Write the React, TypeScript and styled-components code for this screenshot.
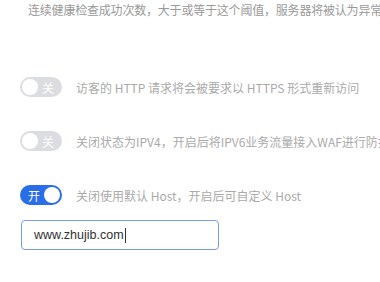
import React from "react";
import styled, { createGlobalStyle } from "styled-components";

const Global = createGlobalStyle`
  html, body {
    margin: 0;
    padding: 0;
    background: #ffffff;
  }
  body {
    font-family: "Noto Sans CJK SC", "Noto Sans", sans-serif;
    overflow: hidden;
  }
`;

const Page = styled.div`
  width: 380px;
  height: 282px;
  padding-left: 20px;
  box-sizing: border-box;
  display: flex;
  flex-direction: column;
  overflow: hidden;
`;

const Hint = styled.p`
  margin: 0 0 0 8px;
  height: 20px;
  line-height: 20px;
  font-size: 12px;
  letter-spacing: -0.2px;
  color: #999999;
  white-space: nowrap;
`;

const Row = styled.div<{ $top: number }>`
  margin-top: ${(p) => p.$top}px;
  height: 20px;
  display: flex;
  align-items: center;
  gap: 14px;
`;

const Track = styled.span<{ $on: boolean }>`
  position: relative;
  flex: none;
  width: 42px;
  height: 20px;
  border-radius: 10px;
  box-sizing: border-box;
  background: ${(p) => (p.$on ? "#2a6de8" : "#dcdde1")};
  display: flex;
  align-items: center;
  justify-content: ${(p) => (p.$on ? "flex-start" : "flex-end")};
  padding: 0 8px;
  color: #ffffff;
  font-size: 12px;
`;

const Knob = styled.span<{ $on: boolean }>`
  position: absolute;
  top: 2px;
  ${(p) => (p.$on ? "right: 2px;" : "left: 2px;")}
  width: 16px;
  height: 16px;
  border-radius: 50%;
  background: #ffffff;
`;

const Label = styled.span`
  font-size: 12px;
  color: #aaaaaa;
  white-space: nowrap;
`;

const Field = styled.div`
  margin-top: 15px;
  margin-left: 1px;
  width: 198px;
  height: 30px;
  box-sizing: border-box;
  border: 1px solid #779dea;
  border-radius: 4px;
  padding-left: 12px;
  display: flex;
  align-items: center;
  font-family: "Liberation Sans", "Noto Sans CJK SC", sans-serif;
  font-size: 12.5px;
  color: #303133;
`;

const Caret = styled.span`
  display: inline-block;
  width: 1px;
  height: 15px;
  background: #303133;
  margin-left: 1px;
`;

const Switch = ({ on }: { on: boolean }) => (
  <Track $on={on}>
    {on ? "开" : "关"}
    <Knob $on={on} />
  </Track>
);

export default function App() {
  return (
    <Page>
      <Global />
      <Hint>连续健康检查成功次数，大于或等于这个阈值，服务器将被认为异常</Hint>
      <Row $top={57}>
        <Switch on={false} />
        <Label>访客的 HTTP 请求将会被要求以 HTTPS 形式重新访问</Label>
      </Row>
      <Row $top={34}>
        <Switch on={false} />
        <Label>关闭状态为IPV4，开启后将IPV6业务流量接入WAF进行防护</Label>
      </Row>
      <Row $top={34}>
        <Switch on={true} />
        <Label>关闭使用默认 Host，开启后可自定义 Host</Label>
      </Row>
      <Field>
        www.zhujib.com
        <Caret />
      </Field>
    </Page>
  );
}
